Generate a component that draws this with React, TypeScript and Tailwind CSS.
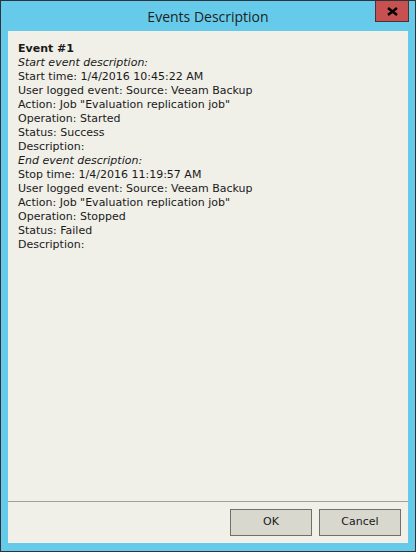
import React from "react";

const lines: { text: string; style?: "bold" | "italic" }[] = [
  { text: "Event #1", style: "bold" },
  { text: "Start event description:", style: "italic" },
  { text: "Start time: 1/4/2016 10:45:22 AM" },
  { text: "User logged event: Source: Veeam Backup" },
  { text: 'Action: Job "Evaluation replication job"' },
  { text: "Operation: Started" },
  { text: "Status: Success" },
  { text: "Description:" },
  { text: "End event description:", style: "italic" },
  { text: "Stop time: 1/4/2016 11:19:57 AM" },
  { text: "User logged event: Source: Veeam Backup" },
  { text: 'Action: Job "Evaluation replication job"' },
  { text: "Operation: Stopped" },
  { text: "Status: Failed" },
  { text: "Description:" },
];

export default function App() {
  return (
    <div className="relative w-[416px] h-[552px] bg-[#66cbea] border border-[#2f3438] flex flex-col">
      <div className="h-[30px] flex items-center justify-center text-[14px] text-[#1e1e1e] font-['Open_Sans',sans-serif]">
        Events Description
      </div>
      <div className="absolute top-0 right-[6px] w-[34px] h-[21px] bg-[#c75050] border border-[#4a3232] border-t-0 flex items-center justify-center">
        <svg width="11" height="9" viewBox="0 0 11 9">
          <path d="M1 1 L10 8 M10 1 L1 8" stroke="#000" strokeWidth="2.4" />
        </svg>
      </div>
      <div className="ml-[7px] w-[400px] h-[512px] bg-[#f0efe8] flex flex-col">
        <div className="flex-1 pl-[10px] pt-[11px] font-['DejaVu_Sans',sans-serif] text-[11px] leading-[14px] text-[#1a1a1a]">
          {lines.map((l, i) => (
            <div
              key={i}
              className={
                l.style === "bold" ? "font-bold" : l.style === "italic" ? "italic" : ""
              }
            >
              {l.text}
            </div>
          ))}
        </div>
        <div className="h-[1px] bg-[#a0a09a]" />
        <div className="flex justify-end gap-[7px] pt-[7px] pb-[7px] pr-[7px] font-['DejaVu_Sans',sans-serif] text-[11px] text-[#1a1a1a]">
          <div className="w-[82px] h-[27px] bg-[#d8d8cf] border border-[#707068] flex items-center justify-center">OK</div>
          <div className="w-[82px] h-[27px] bg-[#d8d8cf] border border-[#707068] flex items-center justify-center">Cancel</div>
        </div>
      </div>
    </div>
  );
}
